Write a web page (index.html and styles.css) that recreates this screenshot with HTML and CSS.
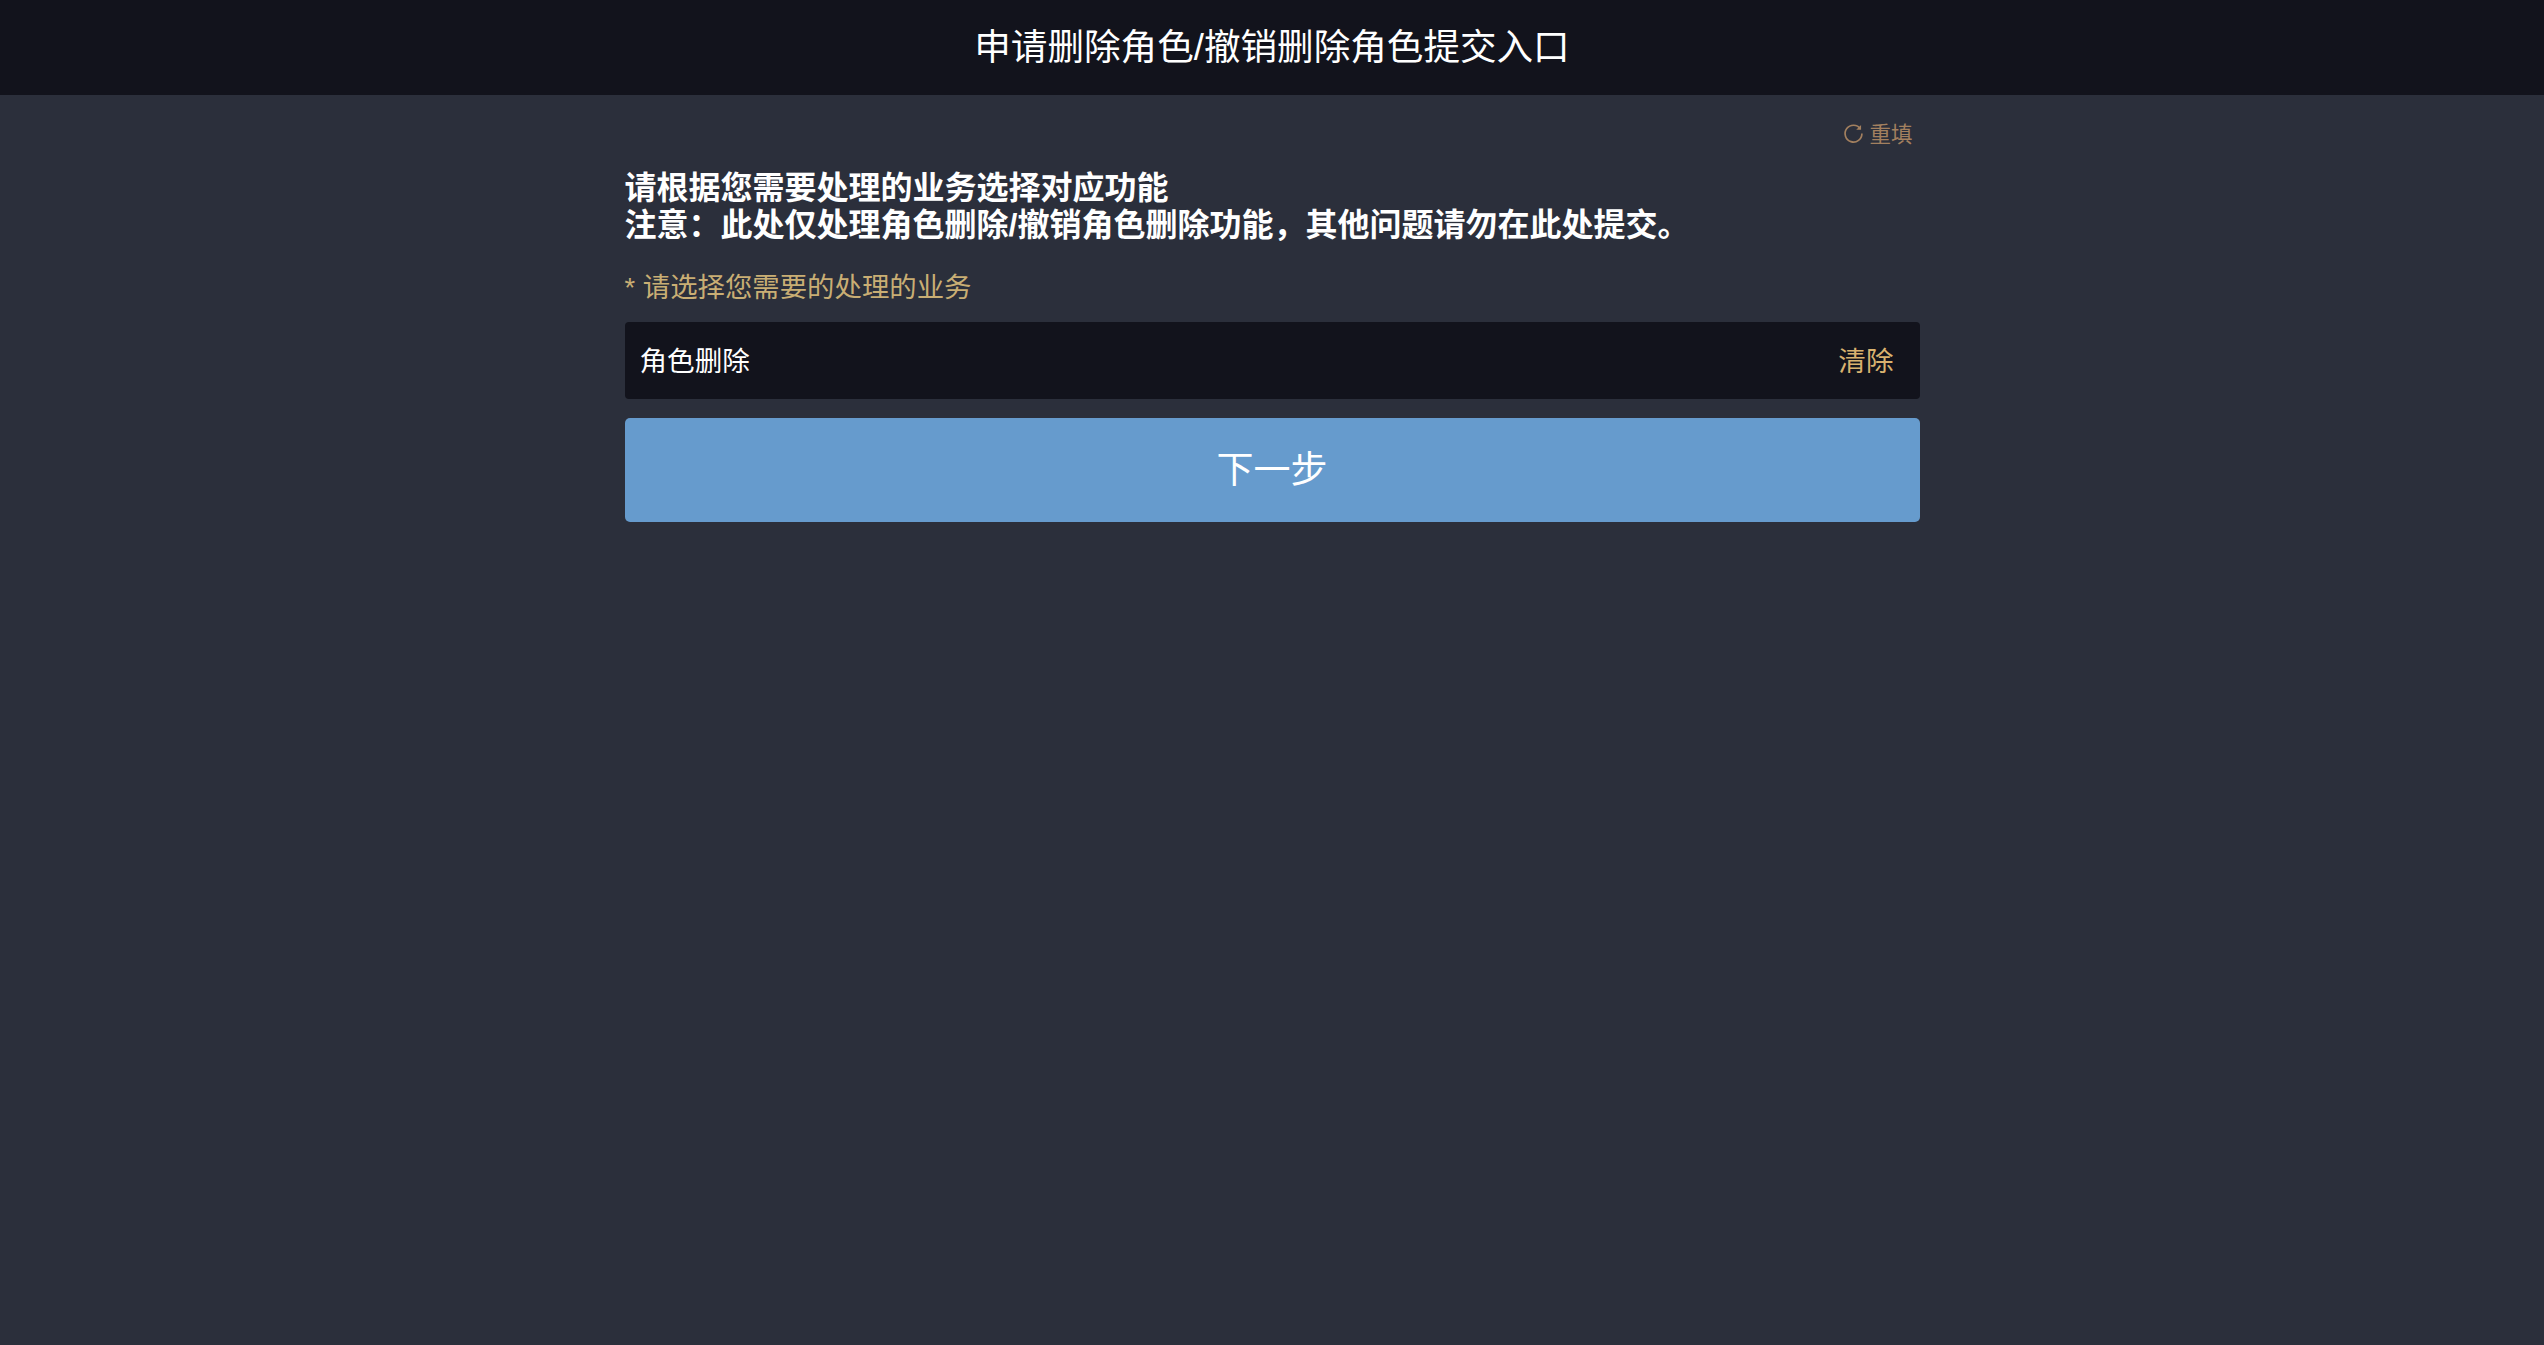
FILE: index.html
```html
<!DOCTYPE html>
<html lang="zh-CN">
<head>
<meta charset="utf-8">
<title>申请删除角色/撤销删除角色提交入口</title>
<link rel="stylesheet" href="styles.css">
</head>
<body>
<header class="top-bar"><h1 class="top-title">申请删除角色/撤销删除角色提交入口</h1></header>
<main class="content">
  <div class="reset-row">
    <a class="reset-link">
      <svg class="reset-icon" viewBox="0 0 20 20" fill="none" stroke="currentColor" stroke-width="1.6"><path d="M16.6 5.6A8 8 0 1 0 18 10"/><path d="M17.2 1.8v4.6h-4.6z" fill="currentColor" stroke="none"/></svg>
      <span>重填</span>
    </a>
  </div>
  <p class="notice">请根据您需要处理的业务选择对应功能<br>注意：此处仅处理角色删除/撤销角色删除功能，其他问题请勿在此处提交。</p>
  <div class="field-label">* 请选择您需要的处理的业务</div>
  <div class="select-box"><span class="select-value">角色删除</span><span class="select-clear">清除</span></div>
  <button class="next-btn" type="button">下一步</button>
</main>
</body>
</html>
```

FILE: styles.css
```css
* { box-sizing: border-box; }
html, body { height: 100%; }
body {
  margin: 0;
  background: #2b2f3b;
  color: #fff;
  font-family: "Liberation Sans", "Noto Sans CJK SC", sans-serif;
}
.top-bar {
  height: 95px;
  padding-top: 2px;
  background: #12131c;
  display: flex;
  align-items: center;
  justify-content: center;
}
.top-title {
  margin: 0;
  font-size: 36.6px;
  font-weight: 400;
  line-height: 1;
}
.content {
  width: 1295px;
  margin: 0 auto;
}
.reset-row {
  display: flex;
  justify-content: flex-end;
  padding: 23px 7px 0 0;
  height: 75px;
}
.reset-link {
  display: flex;
  align-items: center;
  gap: 5px;
  height: 28px;
  font-size: 21.5px;
  color: #a3805f;
}
.reset-icon { width: 21px; height: 21px; margin-top: 2px; }
.notice {
  margin: 0;
  font-size: 32px;
  font-weight: 700;
  line-height: 37px;
}
.field-label {
  margin-top: 25px;
  height: 38px;
  font-size: 27.4px;
  line-height: 38px;
  color: #c9ae74;
}
.select-box {
  margin-top: 15px;
  height: 77px;
  padding: 0 26px 4px 15px;
  background: #12131c;
  border-radius: 4px;
  display: flex;
  align-items: center;
  justify-content: space-between;
  font-size: 27.6px;
}
.select-clear { color: #d9b26f; }
.next-btn {
  display: block;
  width: 100%;
  height: 104px;
  margin-top: 19px;
  padding: 0 0 6px;
  border: 0;
  border-radius: 5px;
  background: #669bcd;
  color: #fff;
  font-family: inherit;
  font-size: 37px;
}
```
